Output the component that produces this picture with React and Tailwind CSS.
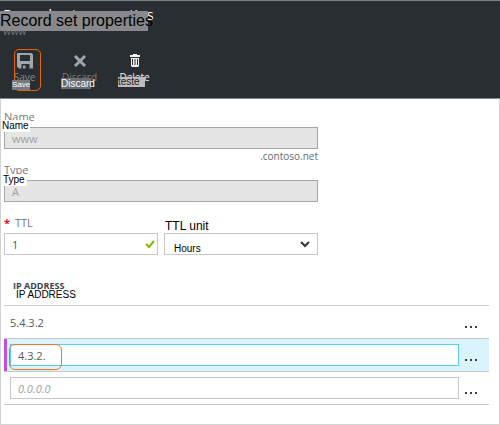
import React from "react";

const overlay = "absolute whitespace-nowrap text-left font-['Liberation_Sans',sans-serif]";

function SaveIcon() {
  return (
    <svg viewBox="0 0 16 16" className="h-4 w-4" aria-hidden="true">
      <path
        fill="#a3a6a9"
        fillRule="evenodd"
        d="M0 0h14.500l1.500 1.500V15.500h-3.500v-4.500H4.500v4.500H2L0 13.500zM3 2v6h10V2zM6 12.500h2.500v3H6z"
      />
    </svg>
  );
}

function DiscardIcon() {
  return (
    <svg viewBox="0 0 16 16" className="h-4 w-4" aria-hidden="true">
      <path d="M3 3l10 10M13 3L3 13" stroke="#a3a6a9" strokeWidth="3" fill="none" />
    </svg>
  );
}

function DeleteIcon() {
  return (
    <svg viewBox="0 0 16 16" className="h-4 w-4" aria-hidden="true">
      <path
        fill="#f4f4f4"
        fillRule="evenodd"
        d="M6 1h4v1h3v2H3V2h3zM4 5h8v8l-1 1H5l-1-1zM5 6v6h1V6zM7.500 6v6h1V6zM10 6v6h1V6z"
      />
    </svg>
  );
}

function Tool({ icon, label, labelClass, children }) {
  return (
    <button type="button" className="relative flex h-12 w-[55px] flex-col items-center pt-1">
      {icon}
      <span className={`text-[10px] leading-4 ${labelClass}`}>{label}</span>
      {children}
    </button>
  );
}

function ReadOnlyField({ id, label, value, tagClass }) {
  return (
    <div className="relative">
      <label htmlFor={id} className="block h-4 text-[11px] leading-4 text-[#75777b]">
        {label}
      </label>
      <input
        id={id}
        defaultValue={value}
        readOnly
        className="mt-0.5 block h-[22px] w-full border border-[#a6a6a6] bg-[#e5e5e5] px-[7px] text-[11px] text-[#a0a0a0] outline-none"
      />
      <span className={`${overlay} text-[10px] leading-3 text-black ${tagClass}`}>{label}</span>
    </div>
  );
}

function More() {
  return (
    <button type="button" aria-label="More" className="flex h-4 w-4 items-end justify-center gap-[3px] pb-1">
      <i className="h-0.5 w-0.5 bg-[#3c3f46]" />
      <i className="h-0.5 w-0.5 bg-[#3c3f46]" />
      <i className="h-0.5 w-0.5 bg-[#3c3f46]" />
    </button>
  );
}

export default function App() {
  return (
    <main className="min-h-screen border-x border-b border-[#d4d4d4] bg-white font-['Open_Sans','Noto_Sans',sans-serif]">
      <header className="-mx-px h-[99px] overflow-hidden border-t border-b border-t-[#7b7e80] border-b-[#7f8f9a] bg-[#292e32]">
        <div className="relative h-10 pl-[3px]">
          <h1 className="pt-[3px] text-[15px] leading-5 text-white">Record set properties</h1>
          <p className="pt-px text-[10px] leading-3 text-[#777b7e]">www</p>
          <span className={`${overlay} top-[10px] left-0 h-5 w-[148px] bg-[#88898c] text-[16px] leading-5 text-black`}>
            Record set properties
          </span>
        </div>
        <nav className="-ml-[3px] flex pt-2">
          <Tool icon={<SaveIcon />} label="Save" labelClass="text-[#85888b]">
            <i className="absolute top-0 left-[17px] h-[42px] w-[27px] rounded-[5px] border border-[#e8640c]" />
            <span className={`${overlay} top-[31px] left-[15px] h-[10px] w-[18px] bg-[#77797c] text-[8px] leading-[10px] text-white`}>
              Save
            </span>
          </Tool>
          <Tool icon={<DiscardIcon />} label="Discard" labelClass="text-[#777a7d]">
            <span className={`${overlay} top-[29px] left-[9px] h-[11px] w-[30px] bg-[#6b6d71] text-[10px] leading-3 text-white`}>
              Discard
            </span>
          </Tool>
          <Tool icon={<DeleteIcon />} label="Delete" labelClass="text-[#f4f4f4]">
            <span className={`${overlay} top-[28px] left-[11px] h-[10px] w-[27px] bg-[#bcbcbc] text-[10px] leading-[10px] text-[#222]`}>
              teste
            </span>
          </Tool>
        </nav>
      </header>

      <form className="px-[3px] pt-[10px]" onSubmit={(e) => e.preventDefault()}>
        <div className="w-[314px] max-w-full">
          <ReadOnlyField id="name" label="Name" value="www" tagClass="top-[11px] -left-0.5 w-7 bg-white" />
          <p className="h-[13px] text-right text-[10px] leading-[14px] text-[#65686d]">.contoso.net</p>
          <ReadOnlyField id="type" label="Type" value="A" tagClass="top-[12px] -left-px w-6 bg-white" />
          <div className="grid grid-cols-2 gap-[6px] pt-[13px]">
            <div>
              <label htmlFor="ttl" className="flex h-[18px] items-center gap-[5px] pb-0.5 text-[11px] leading-4 text-[#75777b]">
                <span className="text-[11px] font-bold text-[#e81123]">*</span>TTL
              </label>
              <div className="relative">
                <input
                  id="ttl"
                  defaultValue="1"
                  className="block h-[22px] w-full border border-[#c8c8c8] px-[7px] text-[11px] text-[#55585e] outline-none"
                />
                <svg viewBox="0 0 10 10" className="absolute top-[6px] right-[3px] h-[10px] w-[10px]" aria-hidden="true">
                  <path d="M1 5l3 3 5-6" fill="none" stroke="#7fba00" strokeWidth="2" />
                </svg>
              </div>
            </div>
            <div>
              <label
                htmlFor="unit"
                className="block h-[18px] pt-[3px] pl-px text-[12px] leading-4 text-black font-['Liberation_Sans',sans-serif]"
              >
                TTL unit
              </label>
              <div className="relative">
                <select
                  id="unit"
                  className="block h-[22px] w-full appearance-none border border-[#c8c8c8] bg-white px-[9px] pt-[9px] text-[10px] leading-3 text-black outline-none font-['Liberation_Sans',sans-serif]"
                >
                  <option>Hours</option>
                </select>
                <svg viewBox="0 0 10 10" className="absolute top-[6px] right-[8px] h-[10px] w-[10px]" aria-hidden="true">
                  <path d="M1 3l4 4 4-4" fill="none" stroke="#33363e" strokeWidth="2" />
                </svg>
              </div>
            </div>
          </div>
        </div>

        <table className="mt-[24px] w-[calc(100%-7px)] border-collapse text-[11px]">
          <thead>
            <tr className="border-b border-[#cfcfcf]">
              <th colSpan={3} className="relative h-[26px] p-0 pt-px pl-[9px] text-left align-top text-[9px] leading-3 font-bold text-[#3e4148]">
                IP ADDRESS
                <span className={`${overlay} top-[10px] left-3 h-3 w-16 bg-white text-[10px] leading-3 font-normal text-black`}>
                  IP ADDRESS
                </span>
              </th>
            </tr>
          </thead>
          <tbody>
            <tr className="h-[33px] border-b border-[#c8c8c8]">
              <td className="w-[6px] p-0" />
              <td className="p-0 pt-1 text-[#55585e]">5.4.3.2</td>
              <td className="w-[30px] p-0 pl-[4px] pt-1"><More /></td>
            </tr>
            <tr className="h-[33px] border-b border-[#c8c8c8] bg-[#d9f4fd]">
              <td className="p-0"><i className="block h-8 w-[3px] bg-[#c44fd8]" /></td>
              <td className="relative p-0">
                <input
                  aria-label="IP address 2"
                  defaultValue="4.3.2."
                  className="block h-[22px] w-full border border-[#59cdf2] bg-white px-[7px] pt-0.5 text-[11px] text-[#55585e] outline-none"
                />
                <i className="absolute top-[5px] -left-px h-[26px] w-[53px] rounded-[6px] border border-[#f0762b]" />
              </td>
              <td className="p-0 pl-[4px] pt-1"><More /></td>
            </tr>
            <tr className="h-[33px] border-b border-[#c8c8c8]">
              <td className="p-0" />
              <td className="p-0">
                <input
                  aria-label="New IP address"
                  placeholder="0.0.0.0"
                  className="block h-[22px] w-full border border-[#c8c8c8] bg-white px-[7px] pt-0.5 text-[11px] italic outline-none placeholder:text-[#a0a0a0]"
                />
              </td>
              <td className="p-0 pl-[4px] pt-1"><More /></td>
            </tr>
          </tbody>
        </table>
      </form>
    </main>
  );
}
